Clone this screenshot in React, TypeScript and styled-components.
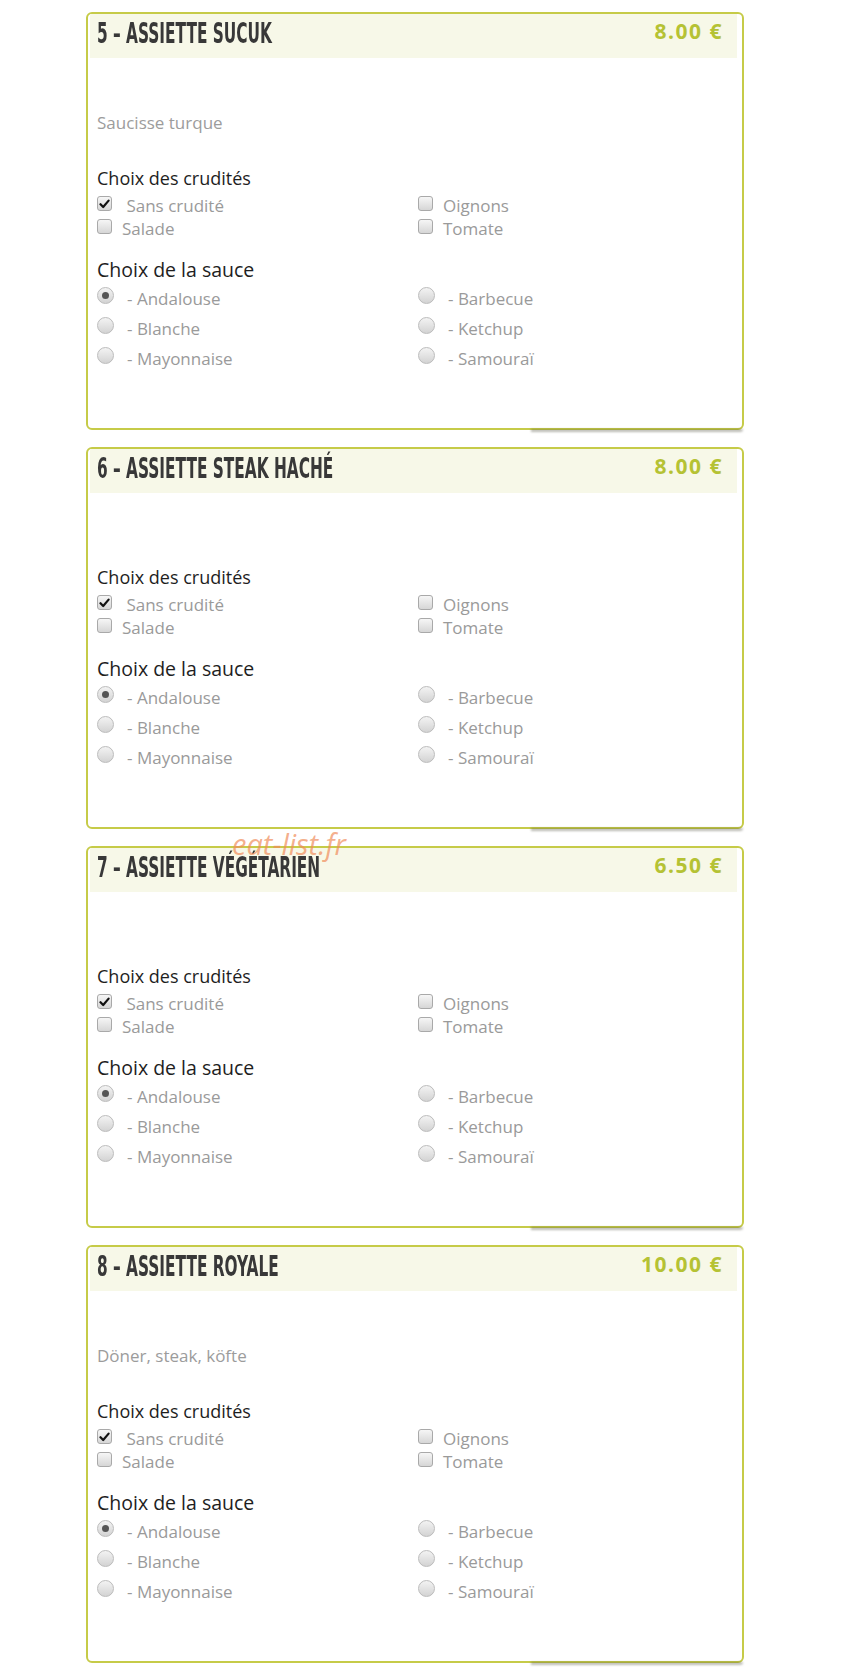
import React from "react";
import styled, { createGlobalStyle } from "styled-components";

interface Dish {
  id: number;
  name: string;
  price: string;
  description?: string;
}

const dishes: Dish[] = [
  { id: 5, name: "ASSIETTE SUCUK", price: "8.00 €", description: "Saucisse turque" },
  { id: 6, name: "ASSIETTE STEAK HACHÉ", price: "8.00 €" },
  { id: 7, name: "ASSIETTE VÉGÉTARIEN", price: "6.50 €" },
  { id: 8, name: "ASSIETTE ROYALE", price: "10.00 €", description: "Döner, steak, köfte" },
];

const crudites = [
  { label: "\u00a0Sans crudité", checked: true },
  { label: "Oignons", checked: false },
  { label: "Salade", checked: false },
  { label: "Tomate", checked: false },
];

const sauces = ["Andalouse", "Barbecue", "Blanche", "Ketchup", "Mayonnaise", "Samouraï"];

const App: React.FC = () => {
  return (
    <>
      <GlobalStyle />
      <Page>
        {dishes.map((dish) => (
          <Card key={dish.id}>
            <Header>
              <Title>
                {dish.id} – {dish.name}
              </Title>
              <Price>{dish.price}</Price>
            </Header>
            <Body>
              {dish.description && <Description>{dish.description}</Description>}
              <SectionTitle>Choix des crudités</SectionTitle>
              <CheckGrid>
                {crudites.map((item) => (
                  <CheckRow key={item.label}>
                    <CheckBox>
                      {item.checked && (
                        <svg width="11" height="10" viewBox="0 0 11 10">
                          <path d="M1.5 5.2 L4.2 8 L9.6 1.6" fill="none" stroke="#111" strokeWidth="2.2" strokeLinecap="round" strokeLinejoin="round" />
                        </svg>
                      )}
                    </CheckBox>
                    <OptionLabel>{item.label}</OptionLabel>
                  </CheckRow>
                ))}
              </CheckGrid>
              <SauceTitle>Choix de la sauce</SauceTitle>
              <RadioGrid>
                {sauces.map((sauce, index) => (
                  <RadioRow key={sauce}>
                    <Radio $checked={index === 0} />
                    <OptionLabel>- {sauce}</OptionLabel>
                  </RadioRow>
                ))}
              </RadioGrid>
            </Body>
          </Card>
        ))}
        <Watermark>eat-list.fr</Watermark>
      </Page>
    </>
  );
};

export default App;

const GlobalStyle = createGlobalStyle`
  body {
    margin: 0;
    background: #fff;
    font-family: "Open Sans", "DejaVu Sans", sans-serif;
  }
`;

const Page = styled.div`
  position: relative;
  display: flex;
  flex-direction: column;
  gap: 17px;
  width: 658px;
  padding: 12px 0 14px 86px;
`;

const Card = styled.div`
  position: relative;
  border: solid 2px #c6cb48;
  border-radius: 6px;
  background: #fff;

  &::after {
    content: "";
    position: absolute;
    right: -1px;
    bottom: -4px;
    width: 212px;
    height: 3px;
    border-radius: 0 0 5px 0;
    background: rgba(60, 60, 40, 0.35);
    filter: blur(1px);
  }
`;

const Header = styled.div`
  display: flex;
  justify-content: space-between;
  align-items: flex-start;
  height: 44px;
  margin: 0 5px 0 2px;
  padding: 0 14px 0 7px;
  background: #f7f8e8;
`;

const Title = styled.h2`
  display: inline-block;
  margin: 5px 0 0;
  font-family: "DejaVu Sans Condensed", "DejaVu Sans", sans-serif;
  font-size: 28px;
  font-weight: 700;
  line-height: 30px;
  color: #383838;
  transform: scaleX(0.61);
  transform-origin: left center;
  white-space: nowrap;
`;

const Price = styled.span`
  margin-top: 5px;
  font-size: 21px;
  font-weight: 700;
  line-height: 24px;
  letter-spacing: 1.5px;
  color: #b5c234;
`;

const Body = styled.div`
  padding: 39px 9px 54px;
`;

const Description = styled.p`
  margin: 16px 0 0;
  font-size: 17px;
  line-height: 20px;
  color: #9c9c9c;
`;

const SectionTitle = styled.h3`
  margin: 34px 0 0;
  font-size: 18px;
  font-weight: 500;
  line-height: 22px;
  color: #1e1e1e;
`;

const SauceTitle = styled(SectionTitle)`
  margin-top: 18px;
  font-size: 19.5px;
  line-height: 24px;
`;

const CheckGrid = styled.div`
  display: grid;
  grid-template-columns: 321px 1fr;
  grid-auto-rows: 23px;
  margin-top: 5px;
`;

const RadioGrid = styled.div`
  display: grid;
  grid-template-columns: 321px 1fr;
  grid-auto-rows: 30px;
  margin-top: 2px;
`;

const CheckRow = styled.label`
  display: flex;
  align-items: center;
  gap: 10px;
`;

const RadioRow = styled.label`
  display: flex;
  align-items: center;
  gap: 13px;
`;

const CheckBox = styled.span`
  display: flex;
  align-items: center;
  justify-content: center;
  box-sizing: border-box;
  width: 15px;
  height: 15px;
  margin-top: -4px;
  border: solid 1px #a9a9a9;
  border-radius: 3px;
  background: linear-gradient(#f6f6f6, #d6d6d6);
`;

const Radio = styled.span<{ $checked: boolean }>`
  position: relative;
  box-sizing: border-box;
  width: 17px;
  height: 17px;
  margin-top: -7px;
  border: solid 1px #bcbcbc;
  border-radius: 50%;
  background: linear-gradient(#f3f3f3, #d3d3d3);

  &::after {
    content: "";
    display: ${({ $checked }) => ($checked ? "block" : "none")};
    position: absolute;
    top: 4px;
    left: 4px;
    width: 7px;
    height: 7px;
    border-radius: 50%;
    background: #555;
  }
`;

const OptionLabel = styled.span`
  font-size: 17px;
  line-height: 20px;
  color: #9a9a9a;
  white-space: pre;
`;

const Watermark = styled.span`
  position: absolute;
  top: 824px;
  left: 232px;
  font-size: 29px;
  font-style: italic;
  color: rgba(240, 140, 90, 0.7);
  pointer-events: none;
`;
